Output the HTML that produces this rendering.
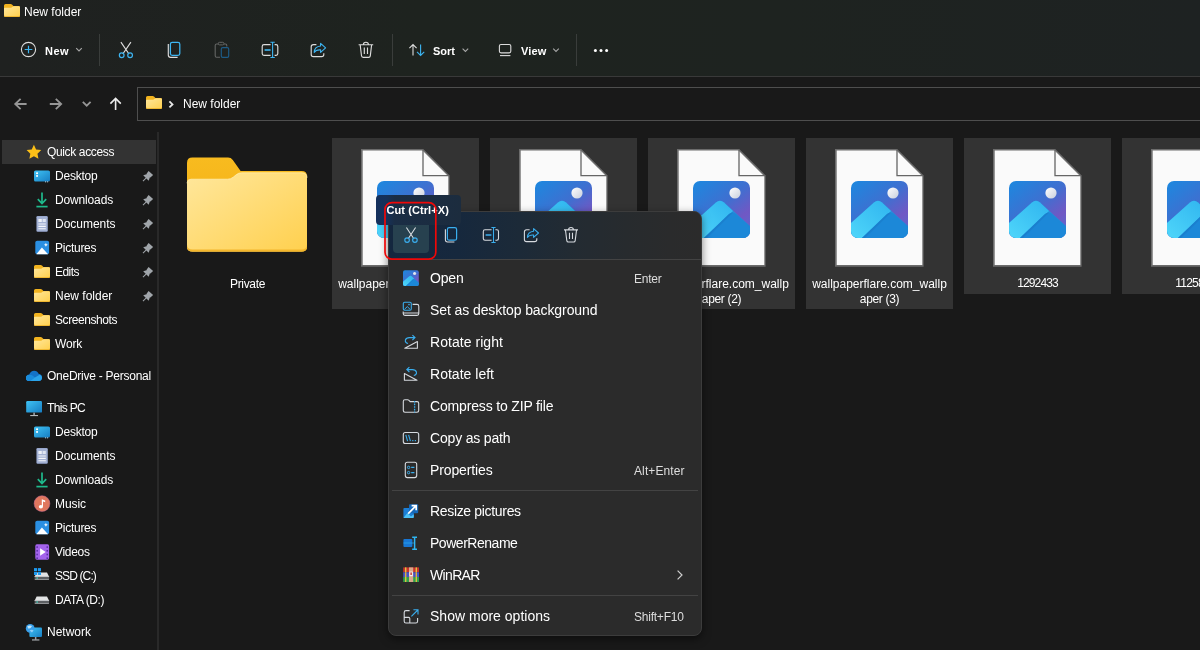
<!DOCTYPE html>
<html lang="en">
<head>
<meta charset="utf-8">
<title>New folder</title>
<style>
*{box-sizing:border-box;margin:0;padding:0}
html,body{width:1200px;height:650px;overflow:hidden;background:#191919}
body{position:relative;font-family:"Liberation Sans",sans-serif;color:#fff;font-size:12px}
#root{position:absolute;left:0;top:0;width:1200px;height:650px;will-change:transform}
svg{position:absolute;left:0;top:0;overflow:visible}
#chrome{position:absolute;left:0;top:0;width:1200px;height:76px;background:linear-gradient(90deg,#1f2120 0%,#1e231f 35%,#1e2320 65%,#1e2222 100%)}
#chromeline{position:absolute;left:0;top:76px;width:1200px;height:1px;background:#393939}
.t{position:absolute;white-space:nowrap;line-height:16px;height:16px;font-size:12px}
.tb{font-size:11px;font-weight:bold;color:#fff}
.vsep{position:absolute;width:1px;background:#3a3d3b;top:34px;height:32px}
#addr{position:absolute;left:137px;top:87px;width:1080px;height:34px;border:1px solid #4e4e4e;background:#191919}
#sbdiv{position:absolute;left:157px;top:132px;width:2px;height:520px;background:#292929}
#qa{position:absolute;left:2px;top:140px;width:154px;height:24px;background:#333333}
.sb{position:absolute;white-space:nowrap;height:16px;line-height:16px;font-size:12px;color:#fff}
.tile{position:absolute;top:138px;width:147px;height:156px;background:#333333}
.tile.tall{height:171px}
.lbl{position:absolute;text-align:center;white-space:nowrap;font-size:12px;line-height:15px;color:#fff;width:147px}
#menu{position:absolute;left:388px;top:211px;width:314px;height:425px;border-radius:8px;background:#2b2b2b;border:1px solid #3c3c3c;box-shadow:0 3px 9px rgba(0,0,0,.5);overflow:hidden}
#menutop{position:absolute;left:0;top:0;width:312px;height:47px;background:linear-gradient(90deg,#14273f 0%,#16283d 22%,#1c2a38 42%,#232b32 60%,#272b2e 76%,#2a2b2c 90%,#2b2b2b 100%)}
.msep{position:absolute;left:3px;width:306px;height:1px;background:#434343}
.mi{position:absolute;left:41px;white-space:nowrap;font-size:14px;line-height:20px;height:20px;color:#fff}
.mk{position:absolute;left:245px;white-space:nowrap;font-size:12px;line-height:16px;height:16px;color:#dedede}
#tip{position:absolute;left:376px;top:195px;width:85px;height:30px;border-radius:4px;background:linear-gradient(90deg,#14305c 0%,#15315a 12%,#1a2d45 22%,#1c2c3e 100%)}
#tiptxt{position:absolute;left:386.5px;top:202px;font-size:11px;font-weight:bold;letter-spacing:0.08px;line-height:16px;color:#fff;white-space:nowrap}
#red{position:absolute;left:384px;top:202px;width:52px;height:58px;border:1.7px solid #ee0a0a;border-radius:8px}
#cuthl{position:absolute;left:393px;top:217px;width:36px;height:36px;border-radius:4px;background:#27414f}
</style>
</head>
<body>
<div id="root">
<div id="chrome"></div><div id="chromeline"></div>
<div class="t" style="left:24px;top:4px">New folder</div>
<div class="t tb" style="left:45px;top:43px;letter-spacing:0.45px">New</div>
<div class="vsep" style="left:99px"></div><div class="vsep" style="left:392px"></div><div class="vsep" style="left:576px"></div>
<div class="t tb" style="left:433px;top:43px">Sort</div>
<div class="t tb" style="left:521px;top:43px;letter-spacing:0.15px">View</div>
<div id="addr"></div>
<div class="t" style="left:183px;top:96px">New folder</div>
<div id="sbdiv"></div><div id="qa"></div>
<div class="sb" style="left:47px;top:144px;letter-spacing:-0.36px">Quick access</div>
<div class="sb" style="left:55px;top:168px;letter-spacing:-0.22px">Desktop</div>
<div class="sb" style="left:55px;top:192px;letter-spacing:-0.15px">Downloads</div>
<div class="sb" style="left:55px;top:216px;letter-spacing:-0.02px">Documents</div>
<div class="sb" style="left:55px;top:240px;letter-spacing:-0.26px">Pictures</div>
<div class="sb" style="left:55px;top:264px;letter-spacing:-0.54px">Edits</div>
<div class="sb" style="left:55px;top:288px;">New folder</div>
<div class="sb" style="left:55px;top:312px;letter-spacing:-0.43px">Screenshots</div>
<div class="sb" style="left:55px;top:336px;letter-spacing:-0.2px">Work</div>
<div class="sb" style="left:47px;top:368px;letter-spacing:-0.25px">OneDrive - Personal</div>
<div class="sb" style="left:47px;top:400px;letter-spacing:-0.67px">This PC</div>
<div class="sb" style="left:55px;top:424px;letter-spacing:-0.22px">Desktop</div>
<div class="sb" style="left:55px;top:448px;letter-spacing:-0.02px">Documents</div>
<div class="sb" style="left:55px;top:472px;letter-spacing:-0.15px">Downloads</div>
<div class="sb" style="left:55px;top:496px;letter-spacing:-0.07px">Music</div>
<div class="sb" style="left:55px;top:520px;letter-spacing:-0.26px">Pictures</div>
<div class="sb" style="left:55px;top:544px;letter-spacing:-0.31px">Videos</div>
<div class="sb" style="left:55px;top:568px;letter-spacing:-0.88px">SSD (C:)</div>
<div class="sb" style="left:55px;top:592px;letter-spacing:-0.43px">DATA (D:)</div>
<div class="sb" style="left:47px;top:624px;">Network</div>
<div class="tile tall" style="left:332px"></div>
<div class="tile tall" style="left:490px"></div>
<div class="tile tall" style="left:648px"></div>
<div class="tile tall" style="left:806px"></div>
<div class="tile" style="left:964px"></div>
<div class="tile" style="left:1122px"></div>
<div class="lbl" style="left:174px;top:277px;letter-spacing:-0.34px">Private</div>
<div class="lbl" style="left:332px;top:277px">wallpaperflare.com_wallp<br><span style="letter-spacing:-0.34px">aper</span></div>
<div class="lbl" style="left:490px;top:277px">wallpaperflare.com_wallp<br><span style="letter-spacing:-0.34px">aper (1)</span></div>
<div class="lbl" style="left:648px;top:277px">wallpaperflare.com_wallp<br><span style="letter-spacing:-0.34px">aper (2)</span></div>
<div class="lbl" style="left:806px;top:277px">wallpaperflare.com_wallp<br><span style="letter-spacing:-0.34px">aper (3)</span></div>
<div class="lbl" style="left:964px;top:276px;letter-spacing:-0.86px">1292433</div>
<div class="lbl" style="left:1122px;top:276px;letter-spacing:-0.73px">1125894</div>
<svg width="1200" height="650" viewBox="0 0 1200 650"><defs>
<linearGradient id="fF" x1="0" y1="0" x2="1" y2="1"><stop offset="0" stop-color="#ffe79c"/><stop offset="1" stop-color="#ffd04e"/></linearGradient>
<linearGradient id="fB" x1="0" y1="0" x2="0" y2="1"><stop offset="0" stop-color="#f8bb1f"/><stop offset="1" stop-color="#f2ac14"/></linearGradient>
<linearGradient id="ph" x1="0.1" y1="0" x2="0.9" y2="1"><stop offset="0" stop-color="#1f86de"/><stop offset="0.45" stop-color="#3f6fd0"/><stop offset="0.75" stop-color="#7058c4"/><stop offset="1" stop-color="#5a6ad0"/></linearGradient>
<linearGradient id="m1" x1="0" y1="1" x2="1" y2="0"><stop offset="0" stop-color="#4fd6fa"/><stop offset="1" stop-color="#2fb4ef"/></linearGradient>
<linearGradient id="m2" x1="0" y1="0" x2="1" y2="1"><stop offset="0" stop-color="#2a9de8"/><stop offset="1" stop-color="#1b82d4"/></linearGradient>
<linearGradient id="dk" x1="0" y1="0" x2="1" y2="1"><stop offset="0" stop-color="#3fc3f5"/><stop offset="1" stop-color="#177dc2"/></linearGradient>
<linearGradient id="st" x1="0" y1="0" x2="0" y2="1"><stop offset="0" stop-color="#ffd84a"/><stop offset="1" stop-color="#f5b216"/></linearGradient>
<linearGradient id="sun" x1="0" y1="0" x2="1" y2="1"><stop offset="0" stop-color="#ffffff"/><stop offset="1" stop-color="#c8cfdc"/></linearGradient>
<clipPath id="pc"><rect x="0" y="0" width="57" height="57" rx="7"/></clipPath>
<g id="photo"><rect width="57" height="57" rx="7" fill="url(#ph)"/><g clip-path="url(#pc)">
<path d="M0 42 L23 21.5 Q27 18 31 21.5 L57 45 V57 H0Z" fill="url(#m2)"/>
<path d="M0 42 L23 21.5 Q27 18 31 21.5 L40 30 L11 57 H0Z" fill="url(#m1)"/>
<path d="M11 57 L36 33 Q39.5 29.8 43 33 L57 46.5 V57Z" fill="#1c88d8"/>
<path d="M11 57 L36 33 Q38 31.2 40 31.5 L14 57Z" fill="#1a78c6" opacity=".55"/>
</g><circle cx="42" cy="12" r="5.6" fill="url(#sun)"/></g>
<g id="page"><path d="M0 0 H62.2 L88.6 26.4 V117.8 H0Z" fill="#6c6c6c"/><path d="M1.7 1.5 H61.5 L87.3 27.3 V115.9 H1.7Z" fill="#fafafa"/>
<path d="M62 0.8 V26.6 H87.8" fill="none" stroke="#666666" stroke-width="1.3" stroke-linejoin="miter"/>
<use href="#photo" x="16" y="32"/></g>
<g id="sfold"><path d="M0 1.6 Q0 0 1.6 0 H6.6 Q7.4 0 8 .6 L9.4 2 H14.6 Q16 2 16 3.4 V11.4 Q16 12.8 14.6 12.8 H1.4 Q0 12.8 0 11.4Z" fill="#f2b31f"/>
<path d="M0 4.6 Q0 3.8 .9 3.8 H6.6 Q7.3 3.8 7.9 3.3 L8.6 2.7 Q9.2 2.3 9.9 2.3 H14.8 Q16 2.3 16 3.5 V11.4 Q16 12.8 14.6 12.8 H1.4 Q0 12.8 0 11.4Z" fill="url(#fF)"/>
<path d="M0 11 V11.4 Q0 12.8 1.4 12.8 H14.6 Q16 12.8 16 11.4 V11 Q16 12 14.6 12 H1.4 Q0 12 0 11Z" fill="#f0b429"/></g>
<g id="pin"><path d="M6.2 0.2L10.7 4.3L8 6.6L7.4 6.7L6.3 10L4 7.6L0.9 10.7L0.2 10L3.3 6.9L0.8 4.5L4.2 3.5L4.3 2.7Z" fill="#a0a5aa"/></g>
</defs><use href="#sfold" x="4" y="4"/>
<circle cx="28.5" cy="49.5" r="7.1" fill="none" stroke="#dcdcdc" stroke-width="1.1"/><path d="M28.5 45.7V53.3M24.7 49.5H32.3" stroke="#3db5f2" stroke-width="1.2" fill="none"/>
<path d="M76.2 48.2L79 51L81.8 48.2" stroke="#a8a8a8" stroke-width="1.1" fill="none"/>
<path d="M120.9 42.2L129 54M130.9 42.2L122.8 54" stroke="#dcdcdc" stroke-width="1.15" fill="none"/><circle cx="121.7" cy="55.2" r="2.35" fill="none" stroke="#3db5f2" stroke-width="1.2"/><circle cx="130.1" cy="55.2" r="2.35" fill="none" stroke="#3db5f2" stroke-width="1.2"/>
<path d="M168.3 44V55Q168.3 57.3 170.6 57.3H177.6" stroke="#dcdcdc" stroke-width="1.15" fill="none"/><rect x="170.4" y="42.4" width="9.4" height="13" rx="1.8" fill="none" stroke="#3db5f2" stroke-width="1.25"/>
<path d="M218.5 44H216.6Q215.2 44 215.2 45.4V55.8Q215.2 57.2 216.6 57.2H220M224 44H225.4Q226.8 44 226.8 45.4V46.6" stroke="#646664" stroke-width="1.1" fill="none"/><rect x="218.3" y="42.3" width="5.6" height="2.6" rx="1.2" fill="none" stroke="#646664" stroke-width="1"/><rect x="221.3" y="47.6" width="7.4" height="9.8" rx="1.4" fill="none" stroke="#1d5c88" stroke-width="1.15"/>
<path d="M270.6 44.6H264Q262.2 44.6 262.2 46.4V53.6Q262.2 55.4 264 55.4H270.6M274.6 44.6H276Q277.8 44.6 277.8 46.4V53.6Q277.8 55.4 276 55.4H274.6" stroke="#dcdcdc" stroke-width="1.15" fill="none"/><path d="M272.6 42.4V57.4M270.4 42.3H274.8M270.4 57.5H274.8" stroke="#3db5f2" stroke-width="1.1" fill="none"/><path d="M264.6 50H270.6" stroke="#3db5f2" stroke-width="1.6" fill="none"/>
<path d="M316.4 44.6H313.4Q311.2 44.6 311.2 46.8V54.4Q311.2 56.6 313.4 56.6H321.6Q323.8 56.6 323.8 54.4V53.2" stroke="#dcdcdc" stroke-width="1.15" fill="none"/><path d="M320.6 43.4L325.6 47.9L320.6 52.4V49.9Q316 49.6 314.2 52.4Q314.4 46.6 320.6 46Z" stroke="#3db5f2" stroke-width="1.1" fill="none" stroke-linejoin="round"/>
<path d="M358.6 44.7H373.2M363.4 44.5Q363.4 42.2 365.9 42.2Q368.4 42.2 368.4 44.5M360.2 45L361.5 55.8Q361.7 57.3 363.2 57.3H368.6Q370.1 57.3 370.3 55.8L371.6 45M364.3 47.6V54M367.5 47.6V54" stroke="#dcdcdc" stroke-width="1.15" fill="none"/>
<path d="M413 55.6V44.6M409.4 48.2L413 44.5L416.6 48.2" stroke="#dcdcdc" stroke-width="1.1" fill="none"/><path d="M420.6 44.4V55.4M417 51.8L420.6 55.5L424.2 51.8" stroke="#3db5f2" stroke-width="1.1" fill="none"/>
<path d="M462.6 48.6L465.4 51.4L468.2 48.6" stroke="#a8a8a8" stroke-width="1.1" fill="none"/>
<rect x="499.4" y="44.5" width="11.4" height="8.4" rx="1.6" fill="none" stroke="#dcdcdc" stroke-width="1.1"/><path d="M500 55.6H510.4" stroke="#dcdcdc" stroke-width="1.1"/>
<path d="M553.2 48.6L556 51.4L558.8 48.6" stroke="#a8a8a8" stroke-width="1.1" fill="none"/>
<circle cx="595.4" cy="50.5" r="1.5" fill="#fff"/><circle cx="601" cy="50.5" r="1.5" fill="#fff"/><circle cx="606.6" cy="50.5" r="1.5" fill="#fff"/>
<path d="M26.6 104H15.4M20.6 98.8L15.2 104L20.6 109.2" stroke="#969696" stroke-width="1.8" fill="none"/>
<path d="M49.8 104H61M55.8 98.8L61.2 104L55.8 109.2" stroke="#969696" stroke-width="1.8" fill="none"/>
<path d="M82.8 101.8L86.7 105.7L90.6 101.8" stroke="#969696" stroke-width="1.8" fill="none"/>
<path d="M115.6 110V98.6M110.4 103.6L115.6 98.4L120.8 103.6" stroke="#ececec" stroke-width="1.6" fill="none"/>
<use href="#sfold" x="146" y="96"/>
<path d="M169.4 101.4L172.5 104.4L169.4 107.4" stroke="#e8e8e8" stroke-width="1.8" fill="none"/><polygon points="33.90,144.80 36.10,149.47 41.22,150.12 37.47,153.66 38.43,158.73 33.90,156.25 29.37,158.73 30.33,153.66 26.58,150.12 31.70,149.47" fill="#fbbf17"/>
<rect x="34" y="170.4" width="16" height="11.2" rx="1.6" fill="url(#dk)"/><rect x="36.1" y="172.4" width="1.9" height="1.7" fill="#fff"/><rect x="36.1" y="175.1" width="1.9" height="1.7" fill="#fff"/><rect x="45" y="181.4" width="1.1" height="0.9" fill="#cfe6f5"/><rect x="47" y="181.4" width="1.1" height="0.9" fill="#cfe6f5"/>
<path d="M42 192.4V203.4M37.8 199.2L42 203.6L46.2 199.2" stroke="#1fba8c" stroke-width="1.7" fill="none"/><path d="M36.4 206.6H47.6" stroke="#1fba8c" stroke-width="1.7"/>
<rect x="36.4" y="216" width="11.4" height="15.8" rx="1.2" fill="#8c9cc4"/><rect x="37.0" y="216.6" width="10.2" height="14.6" rx="0.8" fill="#a3b1d3"/><rect x="38.4" y="219" width="3.4" height="3" fill="#eef1f8"/><rect x="42.6" y="219" width="3.2" height="3" fill="#dfe5f2"/><path d="M38.4 224H45.8M38.4 226.4H45.8M38.4 228.8H45.8" stroke="#f4f6fb" stroke-width="1.1"/>
<rect x="35.3" y="240.79999999999998" width="13.8" height="13.4" rx="1.8" fill="#2a8fe3"/><path d="M36.3 254.2L41.9 247.39999999999998L48.099999999999994 254.2Z" fill="#fff"/><path d="M45.9 242.79999999999998L46.5 244.2L47.9 244.79999999999998L46.5 245.39999999999998L45.9 246.79999999999998L45.3 245.39999999999998L43.9 244.79999999999998L45.3 244.2Z" fill="#fff"/>
<use href="#sfold" x="34" y="265"/>
<use href="#sfold" x="34" y="289"/>
<use href="#sfold" x="34" y="313"/>
<use href="#sfold" x="34" y="337"/>
<path d="M29.4 381.0Q26 381.0 26 377.8Q26 374.8 29.2 374.6Q30.6 370.8 34.2 370.8Q37.4 370.8 38.6 373.8Q42 374.2 42 377.6Q42 381.0 38.8 381.0Z" fill="#1473c8"/><path d="M29.4 381.0Q26 381.0 26 377.8Q26.2 375.8 28 375.2L35 377.6L39.6 374.8Q42 375.40000000000003 42 377.6Q42 381.0 38.8 381.0Z" fill="#2ba4ea"/><path d="M28 375.2Q30 374.2 32 375.2L35 377.6L30.4 381.0H29.4Q26 381.0 26 377.8Q26.2 375.8 28 375.2Z" fill="#1a8cdc"/>
<rect x="26.2" y="401.0" width="15.8" height="11.6" rx="1.2" fill="url(#dk)"/><rect x="33.3" y="412.6" width="1.6" height="2.6" fill="#9aa0a6"/><rect x="30.2" y="415.0" width="7.8" height="1.1" fill="#b4b8bc"/>
<rect x="34" y="426.4" width="16" height="11.2" rx="1.6" fill="url(#dk)"/><rect x="36.1" y="428.4" width="1.9" height="1.7" fill="#fff"/><rect x="36.1" y="431.09999999999997" width="1.9" height="1.7" fill="#fff"/><rect x="45" y="437.4" width="1.1" height="0.9" fill="#cfe6f5"/><rect x="47" y="437.4" width="1.1" height="0.9" fill="#cfe6f5"/>
<rect x="36.4" y="448" width="11.4" height="15.8" rx="1.2" fill="#8c9cc4"/><rect x="37.0" y="448.6" width="10.2" height="14.6" rx="0.8" fill="#a3b1d3"/><rect x="38.4" y="451" width="3.4" height="3" fill="#eef1f8"/><rect x="42.6" y="451" width="3.2" height="3" fill="#dfe5f2"/><path d="M38.4 456H45.8M38.4 458.4H45.8M38.4 460.8H45.8" stroke="#f4f6fb" stroke-width="1.1"/>
<path d="M42 472.4V483.4M37.8 479.2L42 483.6L46.2 479.2" stroke="#1fba8c" stroke-width="1.7" fill="none"/><path d="M36.4 486.6H47.6" stroke="#1fba8c" stroke-width="1.7"/>
<circle cx="42" cy="503.6" r="7.9" fill="#e0775e"/><circle cx="42" cy="503.6" r="7.9" fill="none" stroke="#c66a9a" stroke-width="0.8" opacity=".6"/><path d="M41.8 506.6V499.2L45.2 500.4V502.2L43 501.4V506.6" fill="#fff"/><ellipse cx="40.9" cy="506.8" rx="2.1" ry="1.7" fill="#fff"/>
<rect x="35.3" y="520.8000000000001" width="13.8" height="13.4" rx="1.8" fill="#2a8fe3"/><path d="M36.3 534.2L41.9 527.4000000000001L48.099999999999994 534.2Z" fill="#fff"/><path d="M45.9 522.8000000000001L46.5 524.2L47.9 524.8000000000001L46.5 525.4000000000001L45.9 526.8000000000001L45.3 525.4000000000001L43.9 524.8000000000001L45.3 524.2Z" fill="#fff"/>
<rect x="35.3" y="544.3" width="13.8" height="15.4" rx="1.6" fill="#a463ec"/><rect x="36.4" y="546.3" width="1.5" height="1.6" fill="#5a2fa6"/><rect x="46.5" y="546.3" width="1.5" height="1.6" fill="#5a2fa6"/><rect x="36.4" y="550.0" width="1.5" height="1.6" fill="#5a2fa6"/><rect x="46.5" y="550.0" width="1.5" height="1.6" fill="#5a2fa6"/><rect x="36.4" y="553.6999999999999" width="1.5" height="1.6" fill="#5a2fa6"/><rect x="46.5" y="553.6999999999999" width="1.5" height="1.6" fill="#5a2fa6"/><rect x="36.4" y="557.4" width="1.5" height="1.6" fill="#5a2fa6"/><rect x="46.5" y="557.4" width="1.5" height="1.6" fill="#5a2fa6"/><path d="M40.099999999999994 548.3L45.699999999999996 552.0L40.099999999999994 555.6999999999999Z" fill="#fff"/>
<path d="M34.7 576.4L36.6 572.6H47L49 576.4Z" fill="#e2e3e4"/><rect x="34.6" y="576" width="14.5" height="3.8" rx="0.8" fill="#5d6063"/><rect x="34.6" y="576" width="14.5" height="1" fill="#c4c6c8"/><rect x="34.6" y="579" width="14.5" height="0.8" rx="0.4" fill="#a9abad"/><rect x="36.4" y="577.5" width="1.6" height="1.1" fill="#3fe0c8"/><rect x="34" y="568.1" width="3.1" height="3.1" fill="#1d9bf0"/><rect x="37.9" y="568.1" width="3.1" height="3.1" fill="#1d9bf0"/><rect x="34" y="571.9" width="3.1" height="3.1" fill="#1d9bf0"/><rect x="37.9" y="571.9" width="3.1" height="3.1" fill="#1d9bf0"/>
<path d="M34.7 600.4L36.6 596.6H47L49 600.4Z" fill="#e2e3e4"/><rect x="34.6" y="600" width="14.5" height="3.8" rx="0.8" fill="#5d6063"/><rect x="34.6" y="600" width="14.5" height="1" fill="#c4c6c8"/><rect x="34.6" y="603" width="14.5" height="0.8" rx="0.4" fill="#a9abad"/><rect x="36.4" y="601.5" width="1.6" height="1.1" fill="#3fe0c8"/>
<rect x="29.4" y="627.6" width="12.6" height="9.4" rx="1" fill="url(#dk)"/><rect x="34.9" y="637.0" width="1.5" height="2.6" fill="#9aa0a6"/><rect x="32" y="639.4" width="7.4" height="1.1" fill="#b4b8bc"/><circle cx="30.2" cy="628.4" r="4.4" fill="#3aa0ea"/><path d="M27.2 626.6Q29.6 624.6 32 626Q31 628.6 28.6 628.8Z" fill="#bfe5fb"/><path d="M29.6 630.4Q31.6 629.4 33.6 630.2L32 632.4Z" fill="#8fd0f6"/>
<use href="#pin" x="142.4" y="170.8"/>
<use href="#pin" x="142.4" y="194.8"/>
<use href="#pin" x="142.4" y="218.8"/>
<use href="#pin" x="142.4" y="242.8"/>
<use href="#pin" x="142.4" y="266.8"/>
<use href="#pin" x="142.4" y="290.8"/><path d="M187 163Q187 157.6 192.4 157.6H228Q231 157.6 232.8 160L240.6 171H301.6Q307 171 307 176.4V246.2Q307 251.6 301.6 251.6H192.4Q187 251.6 187 246.2Z" fill="url(#fB)"/><path d="M187 183.2Q187 179.2 191 179.2H227.6Q230.8 179.2 233.2 177.2L236.4 174.6Q238.6 172.8 241.6 172.8H302Q307 172.8 307 177.8V246.2Q307 251.6 301.6 251.6H192.4Q187 251.6 187 246.2Z" fill="url(#fF)"/><path d="M187 244.6V246.2Q187 251.6 192.4 251.6H301.6Q307 251.6 307 246.2V244.6Q307 249.6 301.6 249.6H192.4Q187 249.6 187 244.6Z" fill="#f3b62c"/><path d="M187 183.2Q187 179.2 191 179.2H227.6Q230.8 179.2 233.2 177.2L236.4 174.6Q238.6 172.8 241.6 172.8H302Q307 172.8 307 177.8" fill="none" stroke="#ffefb8" stroke-width="1" opacity=".7"/><use href="#page" x="361" y="149"/>
<use href="#page" x="519" y="149"/>
<use href="#page" x="677" y="149"/>
<use href="#page" x="835" y="149"/>
<use href="#page" x="993" y="149"/>
<use href="#page" x="1151" y="149"/></svg>
<div id="menu">
<div id="menutop"></div>
<div class="msep" style="top:47px;left:0;width:312px"></div>
<div class="mi" style="top:56px;letter-spacing:-0.19px">Open</div>
<div class="mk" style="top:59px;letter-spacing:-0.24px">Enter</div>
<div class="mi" style="top:88px;letter-spacing:-0.09px">Set as desktop background</div>
<div class="mi" style="top:120px;letter-spacing:0.05px">Rotate right</div>
<div class="mi" style="top:152px;letter-spacing:0.02px">Rotate left</div>
<div class="mi" style="top:184px;letter-spacing:-0.16px">Compress to ZIP file</div>
<div class="mi" style="top:216px;letter-spacing:-0.18px">Copy as path</div>
<div class="mi" style="top:248px;letter-spacing:-0.13px">Properties</div>
<div class="mk" style="top:251px;letter-spacing:0.11px">Alt+Enter</div>
<div class="mi" style="top:289px;letter-spacing:-0.33px">Resize pictures</div>
<div class="mi" style="top:321px;letter-spacing:-0.47px">PowerRename</div>
<div class="mi" style="top:353px;letter-spacing:-0.66px">WinRAR</div>
<div class="mi" style="top:394px;letter-spacing:0.01px">Show more options</div>
<div class="mk" style="top:397px;letter-spacing:-0.23px">Shift+F10</div>
<div class="msep" style="top:278px"></div><div class="msep" style="top:383px"></div>
</div>
<div id="cuthl"></div>
<div id="tip"></div>
<svg width="1200" height="650" viewBox="0 0 1200 650"><path d="M406.4 227.5L414 239M415.6 227.5L408 239" stroke="#d6dadf" stroke-width="1.1" fill="none"/><circle cx="407.1" cy="240.1" r="2.3" fill="none" stroke="#3aaeee" stroke-width="1.15"/><circle cx="414.9" cy="240.1" r="2.3" fill="none" stroke="#3aaeee" stroke-width="1.15"/>
<path d="M445.4 229.2V239.8Q445.4 242 447.6 242H454.4" stroke="#d6dadf" stroke-width="1.1" fill="none"/><rect x="447.4" y="227.6" width="9.2" height="12.6" rx="1.8" fill="none" stroke="#3aaeee" stroke-width="1.2"/>
<path d="M491.6 229.8H485Q483.3 229.8 483.3 231.5V238.5Q483.3 240.2 485 240.2H491.6M495.4 229.8H496.8Q498.5 229.8 498.5 231.5V238.5Q498.5 240.2 496.8 240.2H495.4" stroke="#d6dadf" stroke-width="1.1" fill="none"/><path d="M493.5 227.6V242.4M491.4 227.5H495.6M491.4 242.5H495.6" stroke="#3aaeee" stroke-width="1.05" fill="none"/><path d="M485.6 235H491.4" stroke="#3aaeee" stroke-width="1.5"/>
<path d="M529.6 229.8H526.6Q524.4 229.8 524.4 232V239.4Q524.4 241.6 526.6 241.6H534.6Q536.8 241.6 536.8 239.4V238.2" stroke="#d6dadf" stroke-width="1.1" fill="none"/><path d="M533.6 228.6L538.5 233L533.6 237.4V235Q529.2 234.7 527.4 237.4Q527.6 231.8 533.6 231.2Z" stroke="#3aaeee" stroke-width="1.05" fill="none" stroke-linejoin="round"/>
<path d="M564 229.9H578M568.6 229.7Q568.6 227.5 571 227.5Q573.4 227.5 573.4 229.7M565.5 230.2L566.8 240.6Q567 242 568.4 242H573.6Q575 242 575.2 240.6L576.5 230.2M569.5 232.8V239M572.5 232.8V239" stroke="#d6dadf" stroke-width="1.1" fill="none"/>
<g transform="translate(403,270.2) scale(0.277)"><use href="#photo"/></g>
<path d="M412.6 304.4H417Q418.8 304.4 418.8 306.2V313.6Q418.8 315.4 417 315.4H405Q403.2 315.4 403.2 313.6V311.6M403.4 313H418.6" stroke="#d6dadf" stroke-width="1.1" fill="none"/><rect x="403.3" y="302.2" width="8" height="8" rx="1.4" fill="none" stroke="#3aaeee" stroke-width="1.1"/><path d="M404.4 309.4L407.3 306.6L410.2 309.4" stroke="#3aaeee" stroke-width="1" fill="none"/><circle cx="409" cy="304.6" r="0.8" fill="#3aaeee"/>
<path d="M404.8 348.2H417.4V341.6Z" stroke="#d6dadf" stroke-width="1.1" fill="none" stroke-linejoin="round"/><path d="M408 343.6Q404.8 342.6 405.4 340Q406.2 337.4 410 337.6H414.6M412.4 335.2L415 337.6L412.4 340" stroke="#3aaeee" stroke-width="1.1" fill="none"/>
<path d="M417 380.2H404.4V373.6Z" stroke="#d6dadf" stroke-width="1.1" fill="none" stroke-linejoin="round"/><path d="M413.8 375.6Q417 374.6 416.4 372Q415.6 369.4 411.8 369.6H407.2M409.4 367.2L406.8 369.6L409.4 372" stroke="#3aaeee" stroke-width="1.1" fill="none"/>
<path d="M403.3 401.4Q403.3 399.8 404.9 399.8H407.6Q408.4 399.8 409 400.4L410.2 401.6H417Q418.7 401.6 418.7 403.3V410.6Q418.7 412.3 417 412.3H405Q403.3 412.3 403.3 410.6Z" stroke="#d6dadf" stroke-width="1.1" fill="none"/><path d="M414.6 401V412.4" stroke="#3aaeee" stroke-width="1.3" stroke-dasharray="1.6 1"/>
<rect x="403.3" y="432.5" width="15.4" height="11" rx="2" fill="none" stroke="#d6dadf" stroke-width="1.1"/><path d="M405.8 434.8L407.6 441.2M408.6 434.8L410.4 441.2" stroke="#3aaeee" stroke-width="1.1"/><rect x="412.2" y="440" width="1.2" height="1.2" fill="#3aaeee"/><rect x="414.8" y="440" width="1.2" height="1.2" fill="#3aaeee"/>
<rect x="405.3" y="462.2" width="11.4" height="15.4" rx="2" fill="none" stroke="#d6dadf" stroke-width="1.1"/><circle cx="408.6" cy="467.4" r="1.2" fill="none" stroke="#3aaeee" stroke-width="1"/><circle cx="408.6" cy="472.6" r="1.2" fill="none" stroke="#3aaeee" stroke-width="1"/><path d="M411.2 467.4H414.4M411.2 472.6H414.4" stroke="#3aaeee" stroke-width="1.1"/>
<rect x="403.4" y="508" width="10.4" height="10" rx="1" fill="#1c7fd6"/><rect x="409" y="504.2" width="9.2" height="9" rx="1" fill="#1668b8"/><path d="M403.4 518L407.4 513L411 516.4L413.8 514.2V517Q413.8 518 412.8 518Z" fill="#4cc2f6"/><path d="M408.2 513.6L415.6 506.2M411.6 505.6H416.2V510.2" stroke="#fff" stroke-width="1.7" fill="none"/>
<rect x="403.4" y="539" width="9" height="8" rx="1" fill="#1877d4"/><path d="M414.6 537.4V549M412.2 537.2H417M412.2 549.2H417" stroke="#2fb6f4" stroke-width="1.5" fill="none"/><path d="M403.4 543H414" stroke="#2fb6f4" stroke-width="1.2" opacity=".5"/>
<rect x="403.2" y="567.4" width="15.8" height="4.8" fill="#c8342c"/><rect x="403.2" y="572.2" width="15.8" height="4.8" fill="#4852c4"/><rect x="403.2" y="577" width="15.8" height="5" fill="#2fa04a"/><rect x="405" y="567.4" width="1.4" height="4.8" fill="#e8c040"/><rect x="415.6" y="567.4" width="1.4" height="4.8" fill="#e8c040"/><rect x="405" y="572.2" width="1.4" height="4.8" fill="#d8b040"/><rect x="415.6" y="572.2" width="1.4" height="4.8" fill="#d8b040"/><rect x="405" y="577" width="1.4" height="5" fill="#d8c040"/><rect x="415.6" y="577" width="1.4" height="5" fill="#d8c040"/><rect x="409" y="567.4" width="4.2" height="14.6" fill="#d9a78a"/><rect x="409.4" y="571.6" width="3.4" height="4.6" fill="#f4f0ec"/><rect x="410.4" y="572.4" width="1.4" height="2.6" fill="#c03028"/>
<path d="M677.6 570.6L682 575L677.6 579.4" stroke="#cfcfcf" stroke-width="1.2" fill="none"/>
<path d="M409.6 610.6H406Q404.2 610.6 404.2 612.4V621.2Q404.2 623 406 623H415.8Q417.6 623 417.6 621.2V618M404.4 617.4H408.6Q409.8 617.4 409.8 618.6V622.8" stroke="#d6dadf" stroke-width="1.1" fill="none"/><path d="M411.4 616.4L417.8 610M413.4 609.8H418V614.4" stroke="#3aaeee" stroke-width="1.1" fill="none"/></svg>
<div id="tiptxt">Cut (Ctrl+X)</div>
<svg width="1200" height="650" viewBox="0 0 1200 650"><rect x="385" y="202.6" width="50.8" height="56.6" rx="7" fill="none" stroke="#f00808" stroke-width="1.7"/></svg>
</div>
</body>
</html>
